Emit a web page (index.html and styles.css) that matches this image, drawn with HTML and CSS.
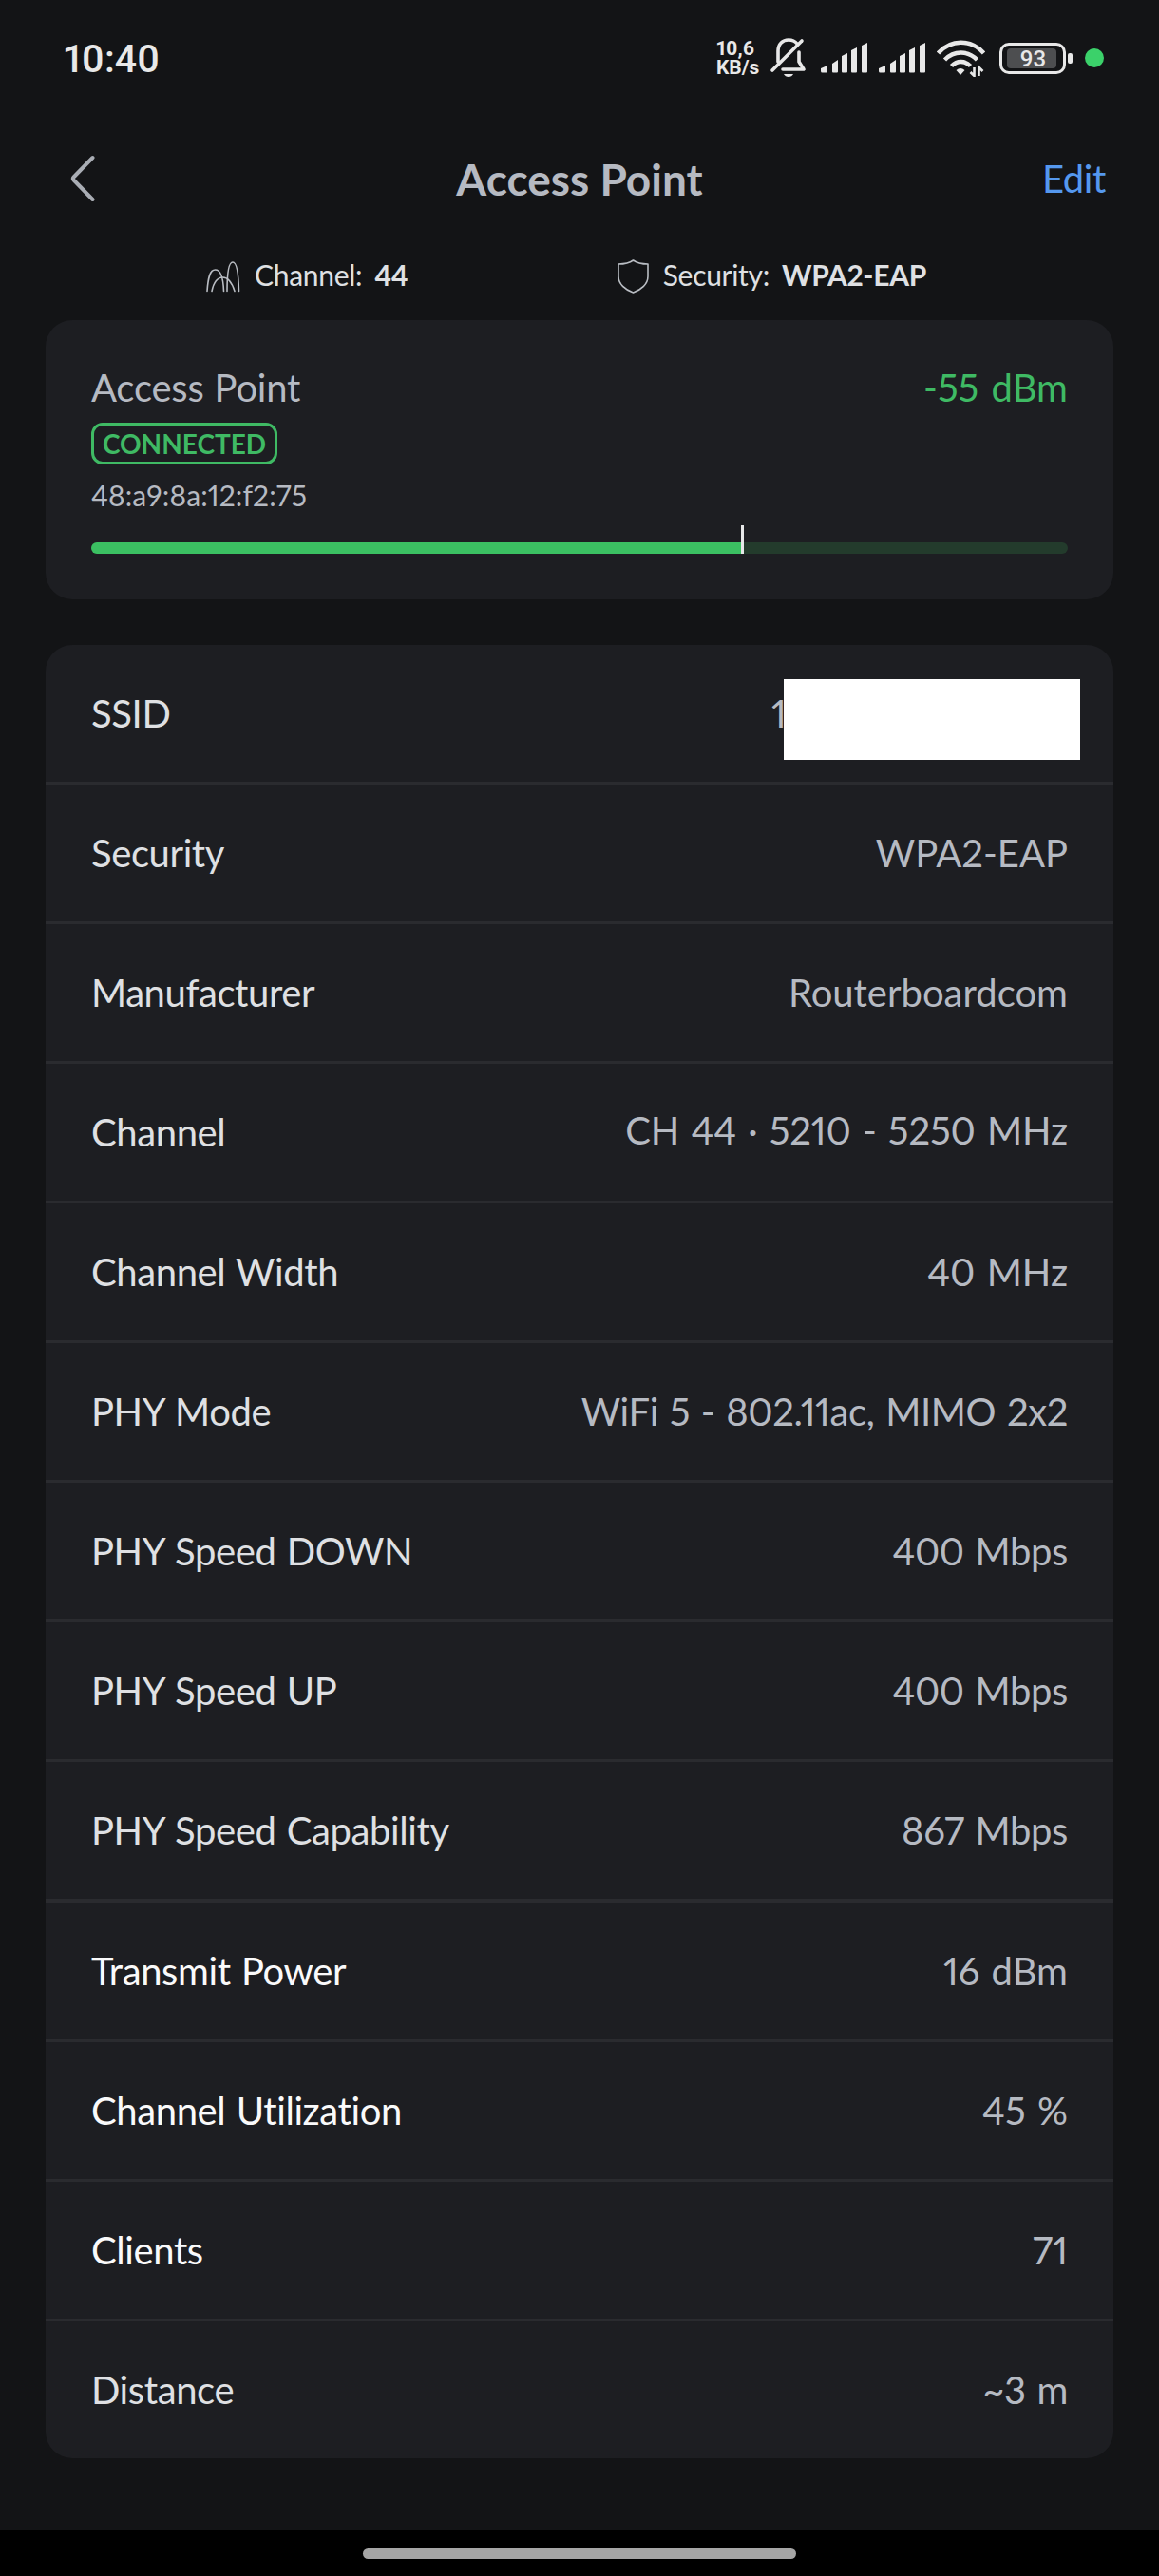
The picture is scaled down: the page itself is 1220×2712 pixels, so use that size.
FILE: index.html
```
<!DOCTYPE html>
<html lang="en">
<head>
    <meta charset="UTF-8">
    <meta name="viewport" content="width=device-width, initial-scale=1">
    <title>Access Point</title>
    <link rel="stylesheet" href="styles.css">
</head>
<body>
    <div class="status-bar">
        <span class="clock">10:40</span>
        <div class="status-icons">
            <div class="net-speed"><span>10,6</span><span>KB/s</span></div>
            <svg class="icon-bell" width="40" height="44" viewBox="0 0 40 44" fill="none" stroke="#e8e8e8" stroke-width="3.6" stroke-linecap="round" stroke-linejoin="round">
                <path d="M9 26V15C9 7 14 3 20 3c4 0 7 1.500 9 4"/>
                <path d="M31 16v10l5 8H14"/>
                <path d="M3 35L34 4"/>
                <path d="M15 39h10q-1.500 3-5 3t-5-3z" fill="#e8e8e8" stroke="none"/>
            </svg>
            <svg class="icon-signal" width="49" height="32" viewBox="0 0 49 32" fill="#e8e8e8">
                <path d="M0 27l7-3v6.500q0 1-1 1H1.500Q0 31.500 0 30zM12 22l6-4v12.500q0 1-1 1h-4q-1 0-1-1zM22 14l6-3v19.500q0 1-1 1h-4q-1 0-1-1zM32 8l6-3v25.500q0 1-1 1h-4q-1 0-1-1zM43 3l6-3v30.500q0 1-1 1h-4q-1 0-1-1z"/>
            </svg>
            <svg class="icon-signal" width="49" height="32" viewBox="0 0 49 32" fill="#e8e8e8">
                <path d="M0 27l7-3v6.500q0 1-1 1H1.500Q0 31.500 0 30zM12 22l6-4v12.500q0 1-1 1h-4q-1 0-1-1zM22 14l6-3v19.500q0 1-1 1h-4q-1 0-1-1zM32 8l6-3v25.500q0 1-1 1h-4q-1 0-1-1zM43 3l6-3v30.500q0 1-1 1h-4q-1 0-1-1z"/>
            </svg>
            <svg class="icon-wifi" width="51" height="39" viewBox="0 0 51 39" fill="none" stroke="#e8e8e8" stroke-width="4.500">
                <path d="M1.500 14C15-1 36-1 49.500 14"/>
                <path d="M8.500 21c9.500-10 24.500-10 34 0"/>
                <path d="M15.500 27.500c6-6 14-6 20 0"/>
                <path d="M20.500 32q4.500-4 9 0L25 37z" fill="#e8e8e8" stroke="none"/>
                <path d="M39.500 29v9l-4-4M44.500 38v-9l4 4" stroke-width="2.600"/>
            </svg>
            <div class="battery"><span class="battery-level">93</span></div>
            <span class="dot"></span>
        </div>
    </div>

    <div class="header">
        <svg class="back" width="26" height="50" viewBox="0 0 26 50" fill="none" stroke="#a9adb4" stroke-width="4" stroke-linecap="round" stroke-linejoin="round">
            <path d="M23.500 3L3.500 23.500q-1.500 1.500 0 3L23.500 47"/>
        </svg>
        <h1>Access Point</h1>
        <a class="edit">Edit</a>
    </div>

    <div class="summary">
        <div class="summary-item">
            <svg width="36" height="33" viewBox="0 0 36 33" fill="none" stroke="#b9bdc3" stroke-width="1.600" stroke-linecap="round">
                <path d="M1 31.500C2 17 4 9 9.500 9s8.500 8 9 22.500"/>
                <path d="M6 31.500C8 22 12 17 17.500 17S27 22 30 31.500"/>
                <path d="M22 31.500C22 12 24 1 28 1s6 11 6.500 30.500"/>
            </svg>
            <span>Channel:</span><b>44</b>
        </div>
        <div class="summary-item">
            <svg width="33" height="41" viewBox="0 0 33 41" fill="none" stroke="#b9bdc3" stroke-width="1.600" stroke-linejoin="round">
                <path d="M16.500 3Q22 7 32 7V20c0 8-7 14-15.500 17C8 34 1 28 1 20V7Q11 7 16.500 3z"/>
            </svg>
            <span>Security:</span><b>WPA2-EAP</b>
        </div>
    </div>

    <div class="card signal">
        <div class="signal-top">
            <span class="name">Access Point</span>
            <span class="dbm">-55 dBm</span>
        </div>
        <span class="badge">CONNECTED</span>
        <span class="mac">48:a9:8a:12:f2:75</span>
        <div class="meter"><div class="meter-fill" style="width: 66.8%"></div></div>
    </div>

    <div class="card list">
        <div class="row"><span>SSID</span><span class="value ssid">1<i class="mask"></i></span></div>
        <div class="row"><span>Security</span><span class="value">WPA2-EAP</span></div>
        <div class="row"><span>Manufacturer</span><span class="value">Routerboardcom</span></div>
        <div class="row"><span>Channel</span><span class="value range">CH 44 · 5210 - 5250 MHz</span></div>
        <div class="row"><span>Channel Width</span><span class="value">40 MHz</span></div>
        <div class="row"><span>PHY Mode</span><span class="value tight">WiFi 5 - 802.11ac, MIMO 2x2</span></div>
        <div class="row"><span>PHY Speed DOWN</span><span class="value tight">400 Mbps</span></div>
        <div class="row"><span>PHY Speed UP</span><span class="value tight">400 Mbps</span></div>
        <div class="row section-end"><span>PHY Speed Capability</span><span class="value tight">867 Mbps</span></div>
        <div class="row bright"><span>Transmit Power</span><span class="value">16 dBm</span></div>
        <div class="row bright"><span>Channel Utilization</span><span class="value">45 %</span></div>
        <div class="row bright"><span>Clients</span><span class="value">71</span></div>
        <div class="row"><span>Distance</span><span class="value tight">~3 m</span></div>
    </div>

    <div class="nav-bar"><div class="nav-handle"></div></div>
</body>
</html>
```
FILE: styles.css
```
* {
    box-sizing: border-box;
}

body {
    margin: 0;
    width: 1220px;
    height: 2712px;
    display: flex;
    flex-direction: column;
    background: #131416;
    color: #dfe0e3;
    font-family: Lato, "Open Sans", sans-serif;
    font-size: 40px;
    font-variant-ligatures: none;
    font-variant-numeric: proportional-nums;
    overflow: hidden;
}

/* status bar */
.status-bar {
    height: 122px;
    padding: 0 58px 0 67px;
    display: flex;
    align-items: center;
    justify-content: space-between;
    color: #e8e8e8;
    font-family: Roboto, sans-serif;
}

.clock {
    padding-top: 2px;
    font-size: 41px;
    font-weight: 500;
}

.status-icons {
    display: flex;
    align-items: center;
}

.net-speed {
    display: flex;
    flex-direction: column;
    width: 45px;
    margin-right: 11px;
    font-size: 21px;
    font-weight: 700;
    line-height: 20px;
    white-space: nowrap;
}

.icon-bell {
    margin-right: 14px;
}

.icon-signal {
    margin-right: 12px;
}

.icon-wifi {
    margin-right: 15px;
}

.battery {
    position: relative;
    width: 70px;
    height: 33px;
    padding: 3px 5px;
    border: 3px solid #e8e8e8;
    border-radius: 10px;
    margin-right: 20px;
}

.battery::after {
    content: "";
    position: absolute;
    right: -10px;
    top: 8px;
    width: 5px;
    height: 11px;
    border-radius: 2px;
    background: #e8e8e8;
}

.battery-level {
    display: block;
    width: 52px;
    height: 21px;
    padding-left: 3px;
    background: #4d4e50;
    border-radius: 4px;
    font-size: 24px;
    font-weight: 500;
    line-height: 22px;
    text-align: center;
}

.dot {
    width: 20px;
    height: 20px;
    border-radius: 50%;
    background: #3bd16a;
}

/* header */
.header {
    height: 132px;
    padding: 0 56px;
    display: grid;
    grid-template-columns: 1fr auto 1fr;
    align-items: center;
}

.back {
    margin-left: 18px;
}

.header h1 {
    margin: 0;
    color: #b6bac2;
    font-size: 46px;
    font-weight: 700;
}

.edit {
    justify-self: end;
    color: #5598ee;
    letter-spacing: -0.4px;
}

.summary {
    height: 83px;
    padding: 1px 245px 0 217px;
    display: flex;
    justify-content: space-between;
    font-size: 30px;
    letter-spacing: -0.3px;
}

.summary-item {
    display: flex;
    align-items: center;
    height: 68px;
}

.summary-item svg {
    margin: 5px 15px 0 0;
}

.summary-item b {
    margin-left: 13px;
}

/* cards */
.card {
    margin: 0 48px;
    background: #1d1e22;
    border-radius: 28px;
}

.signal {
    height: 294px;
    padding: 47px 48px 0;
    margin-bottom: 48px;
    display: flex;
    flex-direction: column;
    align-items: flex-start;
}

.signal-top {
    align-self: stretch;
    display: flex;
    justify-content: space-between;
    line-height: 48px;
    color: #b6bac2;
}

.name {
    letter-spacing: -0.2px;
    word-spacing: 1px;
}

.dbm {
    color: #3fba64;
    word-spacing: 3px;
}

.badge {
    height: 44px;
    width: 196px;
    margin-top: 13px;
    border: 3px solid #3fba64;
    border-radius: 12px;
    color: #3fba64;
    font-size: 28px;
    font-weight: 700;
    line-height: 38px;
    text-align: center;
}

.mac {
    margin-top: 14px;
    color: #b6bac2;
    font-size: 30px;
    line-height: 36px;
    letter-spacing: 0.1px;
}

.meter {
    width: 100%;
    height: 12px;
    margin-top: 32px;
    border-radius: 6px;
    background: #233b2c;
}

.meter-fill {
    position: relative;
    height: 12px;
    border-radius: 6px 0 0 6px;
    background: #3bc062;
}

/* current level tick */
.meter-fill::after {
    content: "";
    position: absolute;
    right: 0;
    bottom: 0;
    width: 3px;
    height: 30px;
    background: #e6e7e8;
}

.row {
    height: 147px;
    padding: 0 48px;
    display: flex;
    align-items: center;
    justify-content: space-between;
    border-bottom: 3px solid #2a2b2f;
    letter-spacing: -0.4px;
    word-spacing: 1.5px;
}

.row.section-end {
    height: 148px;
    border-bottom-width: 4px;
}

.row.bright {
    color: #fafafb;
}

.row:last-child {
    height: 144px;
    border-bottom: none;
}

.row .value {
    color: #b6bac2;
    letter-spacing: 0;
    word-spacing: 2px;
}

.row .tight {
    letter-spacing: -0.4px;
}

.row .range {
    padding-bottom: 4px;
    letter-spacing: -0.1px;
}

.ssid {
    position: relative;
    width: 312px;
}

/* white block that hides the network name */
.mask {
    position: absolute;
    left: 13px;
    top: -12px;
    width: 312px;
    height: 85px;
    background: #fff;
}

.nav-bar {
    height: 48px;
    margin-top: auto;
    display: flex;
    align-items: center;
    justify-content: center;
    background: #000;
}

.nav-handle {
    width: 456px;
    height: 11px;
    border-radius: 6px;
    background: #a5a5a5;
}
```
